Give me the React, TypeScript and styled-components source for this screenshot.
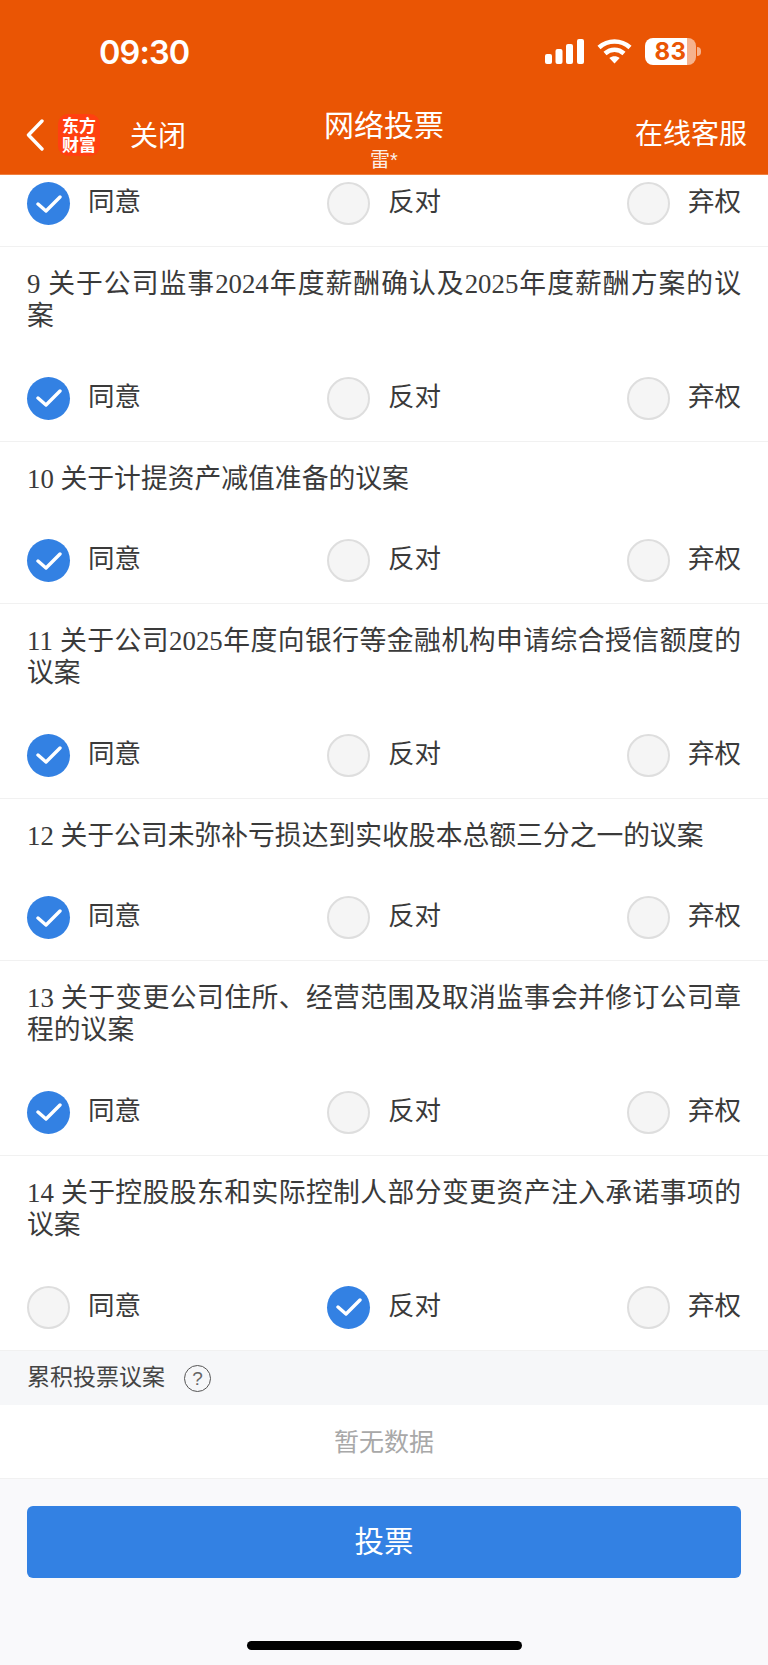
import React from "react";
import styled, { createGlobalStyle } from "styled-components";

const CJK = '"Noto Sans CJK SC", sans-serif';

const GlobalStyle = createGlobalStyle`
  html, body { margin: 0; padding: 0; background: #f9f9fb; }
  * { box-sizing: border-box; }
`;

const Page = styled.div`
  width: 768px;
  height: 1665px;
  display: flex;
  flex-direction: column;
  overflow: hidden;
  background: #f9f9fb;
  font-family: "Liberation Sans", ${CJK};
  color: #333;
`;

const Header = styled.header`
  height: 175px;
  flex: none;
  background: #ea5504;
  border-bottom: 1px solid #f0803f;
  color: #fff;
  display: flex;
  flex-direction: column;
`;

const StatusBar = styled.div`
  height: 104px;
  padding: 36px 72px 0 99px;
  display: flex;
  justify-content: space-between;
  align-items: flex-start;
`;

const Clock = styled.span`
  font-family: Inter, sans-serif;
  font-size: 32.5px;
  line-height: 34px;
  font-weight: 600;
  letter-spacing: -0.9px;
`;

const StatusIcons = styled.div`
  display: flex;
  align-items: center;
  height: 27px;
  margin-top: 2px;
`;

const Battery = styled.div`
  width: 51px;
  height: 27px;
  margin-left: 13px;
  border-radius: 8px;
  background: linear-gradient(90deg, #fff 0 82%, rgba(255, 255, 255, 0.55) 82% 100%);
  color: #ea5504;
  font-family: Inter, sans-serif;
  font-weight: 700;
  font-size: 24px;
  line-height: 27px;
  letter-spacing: 0.5px;
  text-align: center;
  position: relative;

  &::after {
    content: "";
    position: absolute;
    right: -5px;
    top: 9px;
    width: 4px;
    height: 9px;
    border-radius: 0 4px 4px 0;
    background: rgba(255, 255, 255, 0.55);
  }
`;

const NavBar = styled.nav`
  height: 70px;
  padding: 0 26px;
  display: grid;
  grid-template-columns: 1fr auto 1fr;
  align-items: start;
`;

const NavLeft = styled.div`
  display: flex;
  align-items: center;
  height: 62px;
  font-size: 28px;
`;

const NavLabel = styled.span`
  line-height: 36px;
  margin-top: 4px;
`;

const Logo = styled.div`
  width: 42px;
  height: 42px;
  flex: none;
  margin: 0 30px 0 14px;
  border-radius: 10px;
  background: #ff4010;
  font-family: ${CJK};
  font-weight: 700;
  font-size: 17px;
  line-height: 19px;
  text-align: center;
  padding-top: 1px;
`;

const NavTitle = styled.div`
  display: flex;
  flex-direction: column;
  align-items: center;
  margin-top: 3px;
`;

const TitleMain = styled.span`
  font-size: 30px;
  line-height: 38px;
`;

const TitleSub = styled.span`
  font-size: 20px;
  line-height: 22px;
  margin-top: 4px;
  opacity: 0.9;
`;

const NavRight = styled.div`
  justify-self: end;
  margin-right: -5px;
  font-size: 28px;
  line-height: 36px;
  margin-top: 13px;
`;

const List = styled.main`
  background: #fff;
  flex: none;
`;

const Item = styled.section`
  padding: 21px 27px 21px;
  border-bottom: 1px solid #f1f1f1;
`;

const PartialItem = styled(Item)`
  padding-top: 7px;
`;

const Question = styled.p`
  margin: 0 0 44.6px;
  font-family: "Liberation Serif", ${CJK};
  font-size: 26.8px;
  line-height: 32px;
  text-align: justify;
  color: #3a3a3a;
`;

const Choices = styled.div`
  display: flex;
  justify-content: space-between;
`;

const Choice = styled.label`
  display: flex;
  align-items: center;
  gap: 18px;
  height: 43px;
  font-size: 26.5px;
  color: #3a3a3a;
`;

const ChoiceLabel = styled.span`
  line-height: 36px;
  margin-top: -3px;
`;

const Radio = styled.span<{ $on?: boolean }>`
  width: 43px;
  height: 43px;
  flex: none;
  border-radius: 50%;
  display: flex;
  align-items: center;
  justify-content: center;
  background: ${(p) => (p.$on ? "#3381e3" : "#f5f5f5")};
  border: ${(p) => (p.$on ? "none" : "2px solid #dedede")};
`;

const SectionBar = styled.div`
  height: 54px;
  background: #f6f7f9;
  padding-left: 27px;
  display: flex;
  align-items: center;
  font-size: 23px;
  color: #444;
  gap: 19px;
`;

const SectionTitle = styled.span`
  line-height: 32px;
  margin-top: -2px;
`;

const HelpMark = styled.span`
  width: 27px;
  height: 27px;
  margin-top: 2px;
  border-radius: 50%;
  border: 1.5px solid #555;
  display: flex;
  align-items: center;
  justify-content: center;
  font-size: 19px;
  color: #666;
`;

const EmptyRow = styled.div`
  height: 74px;
  background: #fff;
  border-bottom: 1px solid #f1f1f1;
  padding-bottom: 3px;
  display: flex;
  align-items: center;
  justify-content: center;
  font-size: 25px;
  color: #a8a8a8;
`;

const Footer = styled.footer`
  flex: 1;
  padding: 27px 27px 0;
  display: flex;
  flex-direction: column;
  align-items: center;
`;

const VoteButton = styled.button`
  width: 100%;
  height: 72px;
  border: none;
  border-radius: 6px;
  padding: 0 0 6px;
  background: #3381e3;
  color: #fff;
  font-family: ${CJK};
  font-size: 29.5px;
`;

const HomeBar = styled.div`
  width: 275px;
  height: 9px;
  margin-top: 63px;
  border-radius: 5px;
  background: #000;
`;

type Vote = "agree" | "against" | "abstain";

const options: { key: Vote; label: string }[] = [
  { key: "agree", label: "同意" },
  { key: "against", label: "反对" },
  { key: "abstain", label: "弃权" },
];

const motions: { text: string; vote: Vote }[] = [
  { text: "9 关于公司监事2024年度薪酬确认及2025年度薪酬方案的议案", vote: "agree" },
  { text: "10 关于计提资产减值准备的议案", vote: "agree" },
  { text: "11 关于公司2025年度向银行等金融机构申请综合授信额度的议案", vote: "agree" },
  { text: "12 关于公司未弥补亏损达到实收股本总额三分之一的议案", vote: "agree" },
  { text: "13 关于变更公司住所、经营范围及取消监事会并修订公司章程的议案", vote: "agree" },
  { text: "14 关于控股股东和实际控制人部分变更资产注入承诺事项的议案", vote: "against" },
];

const Tick = () => (
  <svg width="26" height="20" viewBox="0 0 26 20" fill="none">
    <path d="M2 10l8 7L24 3" stroke="#fff" strokeWidth="3.4" strokeLinecap="round" strokeLinejoin="round" />
  </svg>
);

const VoteChoices = ({ vote }: { vote: Vote }) => (
  <Choices>
    {options.map((o) => (
      <Choice key={o.key}>
        <Radio $on={o.key === vote}>{o.key === vote && <Tick />}</Radio>
        <ChoiceLabel>{o.label}</ChoiceLabel>
      </Choice>
    ))}
  </Choices>
);

const SignalIcon = () => (
  <svg width="39" height="25" viewBox="0 0 39 25" fill="#fff">
    <rect x="0" y="15" width="7" height="10" rx="2" />
    <rect x="10.5" y="10" width="7" height="15" rx="2" />
    <rect x="21" y="5" width="7" height="20" rx="2" />
    <rect x="32" y="0" width="7" height="25" rx="2" />
  </svg>
);

const WifiIcon = () => (
  <svg width="35" height="25" viewBox="0 0 35 25" fill="none" stroke="#fff" strokeWidth="4.6" style={{ marginLeft: 13 }}>
    <path d="M2 8.5C11 0.5 24 0.5 33 8.5" />
    <path d="M8 14.5c5.8-5 13.2-5 19 0" />
    <path d="M17.5 24.5l-5.2-5.6c3-2.3 7.4-2.3 10.4 0z" fill="#fff" stroke="none" />
  </svg>
);

const BackIcon = () => (
  <svg width="18" height="32" viewBox="0 0 18 32" fill="none">
    <path d="M16 2L2.5 16 16 30" stroke="#fff" strokeWidth="3.4" strokeLinecap="round" strokeLinejoin="round" />
  </svg>
);

export default function App() {
  return (
    <Page>
      <GlobalStyle />
      <Header>
        <StatusBar>
          <Clock>09:30</Clock>
          <StatusIcons>
            <SignalIcon />
            <WifiIcon />
            <Battery>83</Battery>
          </StatusIcons>
        </StatusBar>
        <NavBar>
          <NavLeft>
            <BackIcon />
            <Logo>
              东方
              <br />
              财富
            </Logo>
            <NavLabel>关闭</NavLabel>
          </NavLeft>
          <NavTitle>
            <TitleMain>网络投票</TitleMain>
            <TitleSub>雷*</TitleSub>
          </NavTitle>
          <NavRight>在线客服</NavRight>
        </NavBar>
      </Header>
      <List>
        <PartialItem>
          <VoteChoices vote="agree" />
        </PartialItem>
        {motions.map((m) => (
          <Item key={m.text}>
            <Question>{m.text}</Question>
            <VoteChoices vote={m.vote} />
          </Item>
        ))}
      </List>
      <SectionBar>
        <SectionTitle>累积投票议案</SectionTitle>
        <HelpMark>?</HelpMark>
      </SectionBar>
      <EmptyRow>暂无数据</EmptyRow>
      <Footer>
        <VoteButton>投票</VoteButton>
        <HomeBar />
      </Footer>
    </Page>
  );
}
